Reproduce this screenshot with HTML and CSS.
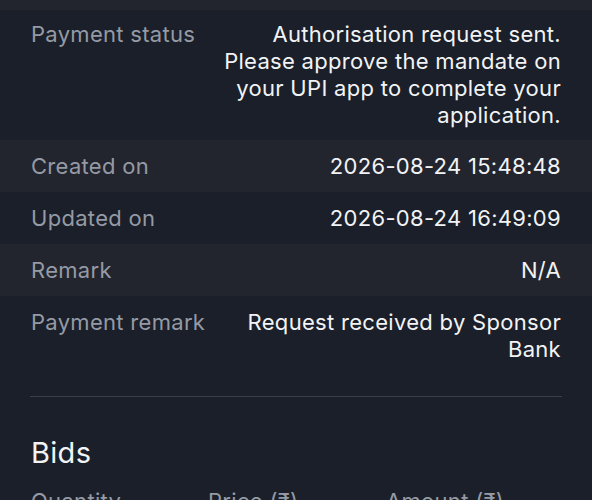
FILE: index.html
```html
<!DOCTYPE html>
<html lang="en">
<head>
    <meta charset="UTF-8">
    <meta name="viewport" content="width=device-width, initial-scale=1.0">
    <title>Application details</title>
    <link rel="stylesheet" href="styles.css">
</head>
<body>
    <div class="top-band"></div>

    <section class="details">
        <div class="row tall">
            <div class="label">Payment status</div>
            <div class="value">Authorisation request sent. Please approve the mandate on your UPI app to complete your application.</div>
        </div>
        <div class="row alt">
            <div class="label">Created on</div>
            <div class="value">2026-08-24 15:48:48</div>
        </div>
        <div class="row">
            <div class="label">Updated on</div>
            <div class="value">2026-08-24 16:49:09</div>
        </div>
        <div class="row alt">
            <div class="label">Remark</div>
            <div class="value">N/A</div>
        </div>
        <div class="row">
            <div class="label">Payment remark</div>
            <div class="value">Request received by Sponsor Bank</div>
        </div>
    </section>

    <hr class="divider">

    <section class="bids">
        <h2>Bids</h2>
        <div class="bids-head">
            <span>Quantity</span>
            <span>Price (₹)</span>
            <span>Amount (₹)</span>
        </div>
    </section>
</body>
</html>
```

FILE: styles.css
```css
body {
    font-family: Inter, "Noto Sans", sans-serif;
    margin: 0;
    padding: 0;
    background-color: #1a1f29;
    color: #f2f3f5;
    font-size: 22px;
    letter-spacing: 0.3px;
}

.top-band {
    height: 10px;
    background: #22252e;
}

.row {
    display: flex;
    gap: 16px;
    padding: 12.5px 31px;
    line-height: 27px;
}

.row.tall {
    padding: 11px 31px;
}

.row.alt {
    background: #22252e;
}

.label {
    flex: 1 0 auto;
    white-space: nowrap;
    color: #959aa5;
}

.value {
    flex: 0 1 342px;
    text-align: right;
}

.divider {
    border: 0;
    border-top: 1px solid #3a3f49;
    margin: 21px 30px 0;
}

.bids {
    padding: 0 31px;
}

.bids h2 {
    font-size: 29px;
    font-weight: 400;
    margin: 38px 0 18px;
}

.bids-head {
    display: grid;
    grid-template-columns: 177px 178px 1fr;
    line-height: 27px;
    color: #959aa5;
}
```
